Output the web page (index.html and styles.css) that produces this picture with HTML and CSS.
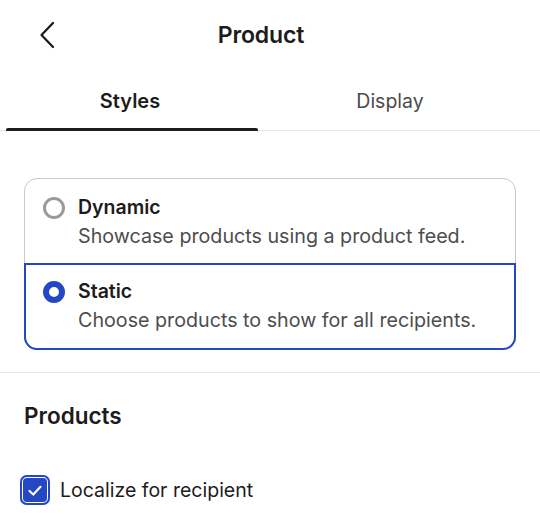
FILE: index.html
```html
<!DOCTYPE html>
<html>
<head>
<meta charset="utf-8">
<link rel="stylesheet" href="styles.css">
</head>
<body>
<div class="page">
  <header class="header">
    <button class="back" aria-label="Back">
      <svg width="18" height="28" viewBox="0 0 18 28"><path d="M15 2 L3.5 14 L15 26" fill="none" stroke="#1c1c1c" stroke-width="2.3" stroke-linecap="round" stroke-linejoin="round"/></svg>
    </button>
    <h1 class="title">Product</h1>
  </header>
  <nav class="tabs">
    <div class="tab active">Styles</div>
    <div class="tab">Display</div>
  </nav>
  <section class="choice-section">
    <div class="choices">
      <label class="choice">
        <span class="radio"></span>
        <span class="choice-text">
          <span class="choice-title">Dynamic</span>
          <span class="choice-desc">Showcase products using a product feed.</span>
        </span>
      </label>
      <label class="choice selected">
        <span class="radio checked"></span>
        <span class="choice-text">
          <span class="choice-title">Static</span>
          <span class="choice-desc">Choose products to show for all recipients.</span>
        </span>
      </label>
    </div>
  </section>
  <section class="products">
    <h2 class="section-title">Products</h2>
    <label class="check-row">
      <span class="checkbox">
        <svg width="18" height="15" viewBox="0 0 18 15"><path d="M3.5 8 L7.3 11.5 L14.5 3.8" fill="none" stroke="#fff" stroke-width="2.2" stroke-linecap="round" stroke-linejoin="round"/></svg>
      </span>
      <span class="check-label">Localize for recipient</span>
    </label>
  </section>
</div>
</body>
</html>
```
FILE: styles.css
```css
* { box-sizing: border-box; }
html, body { margin: 0; padding: 0; background: #fff; }
body {
  font-family: Inter, "Noto Sans", "Liberation Sans", sans-serif;
  color: #1c1c1c;
  width: 540px;
  overflow: hidden;
}
.page { width: 540px; }
.header {
  position: relative;
  height: 70px;
  display: flex;
  align-items: center;
  justify-content: center;
  padding-right: 18px;
}
.back {
  position: absolute;
  left: 38px;
  top: 21px;
  border: 0;
  background: none;
  padding: 0;
  width: 18px;
  height: 28px;
}
.back svg { display: block; }
.title {
  margin: 0;
  font-size: 23px;
  font-weight: 600;
  letter-spacing: -0.1px;
}
.tabs {
  display: grid;
  grid-template-columns: 260px 260px;
  border-bottom: 1px solid #e6e6e6;
  height: 61px;
}
.tab {
  position: relative;
  display: flex;
  align-items: center;
  justify-content: center;
  font-size: 19.5px;
  color: #4a4a4a;
  padding-top: 2px;
}
.tab.active {
  font-weight: 600;
  font-size: 20px;
  color: #1c1c1c;
}
.tab.active::after {
  content: "";
  position: absolute;
  left: 6px;
  right: 2px;
  bottom: -1px;
  height: 3px;
  background: #1c1c1c;
  border-radius: 2px 2px 0 0;
}
.choice-section {
  padding: 47px 24px 22px;
  border-bottom: 1px solid #e6e6e6;
}
.choices {
  border: 1px solid #c9c9c9;
  border-radius: 13px;
}
.choice {
  display: flex;
  align-items: flex-start;
  gap: 13px;
  padding: 15px 18px 14px;
  height: 84px;
}
.choice.selected {
  border: 2px solid #2447c6;
  border-radius: 0 0 13px 13px;
  margin: 0 -1px -1px;
  padding: 13px 17px 14px;
  height: 87px;
}
.radio {
  flex: none;
  width: 22px;
  height: 22px;
  margin-top: 3px;
  border-radius: 50%;
  border: 3px solid #9a9a9a;
}
.radio.checked {
  border: 6px solid #2447c6;
}
.choice-text { display: flex; flex-direction: column; }
.choice-title {
  font-size: 19.5px;
  font-weight: 600;
  line-height: 27px;
}
.choice-desc {
  font-size: 19.7px;
  color: #4d4d4d;
  line-height: 31px;
}
.products { padding: 28px 24px 0 20px; }
.section-title {
  margin: 0 0 0 4px;
  font-size: 22.5px;
  font-weight: 600;
  line-height: 30px;
}
.check-row {
  display: flex;
  align-items: center;
  gap: 10px;
  margin-top: 44px;
}
.checkbox {
  flex: none;
  width: 30px;
  height: 30px;
  border-radius: 7px;
  background: #2447c6;
  display: flex;
  align-items: center;
  justify-content: center;
  box-shadow: inset 0 0 0 2px #2447c6, inset 0 0 0 3px #fff;
}
.checkbox svg { display: block; }
.check-label { font-size: 19.5px; color: #1c1c1c; }
```
